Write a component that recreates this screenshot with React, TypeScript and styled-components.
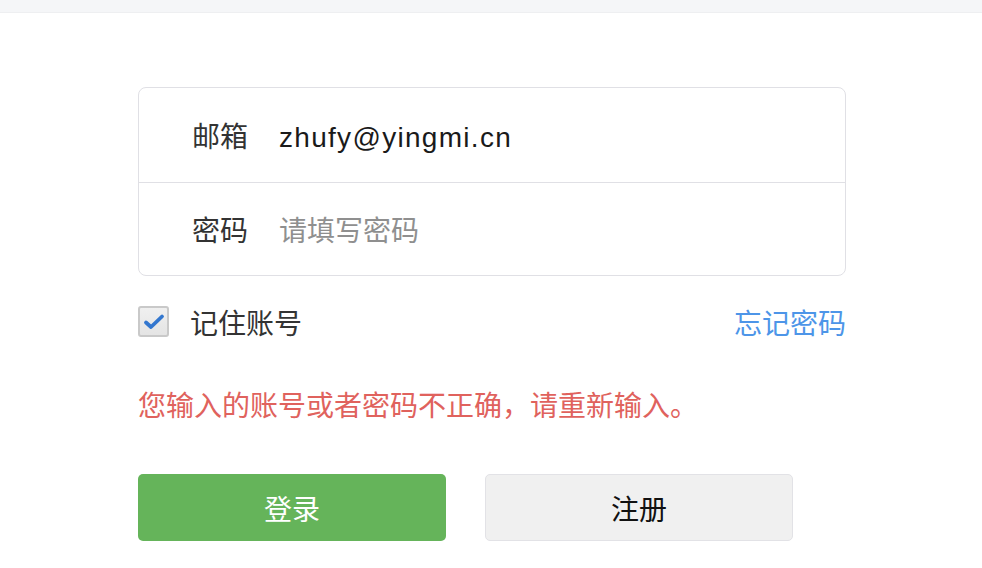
import React from "react";
import styled, { createGlobalStyle } from "styled-components";

const GlobalStyle = createGlobalStyle`
  html, body { margin: 0; padding: 0; background: #ffffff; }
  body { font-family: "Liberation Sans", "Noto Sans CJK SC", sans-serif; }
  * { box-sizing: border-box; }
`;

const TopBar = styled.div`
  height: 13px;
  background: #f5f6f8;
  border-bottom: 1px solid #eeeff1;
`;

const Page = styled.div`
  width: 708px;
  margin: 74px 0 0 138px;
`;

const FormBox = styled.div`
  border: 1.5px solid #e0e0e5;
  border-radius: 8px;
  background: #fff;
`;

const Field = styled.div<{ $first?: boolean }>`
  display: flex;
  align-items: center;
  height: ${(p) => (p.$first ? 94 : 93)}px;
  padding-left: 53px;
  border-top: ${(p) => (p.$first ? "none" : "1.5px solid #e0e0e5")};
`;

const Label = styled.span`
  width: 56px;
  margin-right: 31px;
  font-size: 28px;
  color: #333;
  font-family: "Noto Sans CJK SC", sans-serif;
`;

const Input = styled.input`
  flex: 1;
  border: none;
  outline: none;
  background: transparent;
  padding: 5px 0 0;
  font-size: 28px;
  color: #1a1a1a;
  font-family: "Liberation Sans", "Noto Sans CJK SC", sans-serif;
  letter-spacing: 1.3px;
  &::placeholder {
    color: #8f8f8f;
    letter-spacing: 0;
    font-family: "Noto Sans CJK SC", sans-serif;
  }
`;

const OptionsRow = styled.div`
  display: flex;
  align-items: center;
  justify-content: space-between;
  margin-top: 30px;
  height: 31px;
`;

const Remember = styled.label`
  display: flex;
  align-items: center;
  gap: 21px;
  font-size: 28px;
  color: #333;
  font-family: "Noto Sans CJK SC", sans-serif;
`;

const CheckBox = styled.span`
  width: 31px;
  height: 31px;
  border: 2px solid #c9c9c9;
  border-radius: 3px;
  background: linear-gradient(#f0f0f0, #e4e4e4);
  display: flex;
  align-items: center;
  justify-content: center;
`;

const ForgotLink = styled.a`
  font-size: 28px;
  color: #4d95e8;
  text-decoration: none;
  font-family: "Noto Sans CJK SC", sans-serif;
`;

const ErrorText = styled.p`
  margin: 47px 0 0;
  font-size: 28px;
  line-height: 40px;
  color: #e0625d;
  font-family: "Noto Sans CJK SC", sans-serif;
`;

const Buttons = styled.div`
  display: flex;
  gap: 39px;
  margin-top: 50px;
`;

const Button = styled.button<{ $primary?: boolean }>`
  width: 308px;
  height: 67px;
  border-radius: 5px;
  font-size: 28px;
  font-family: "Noto Sans CJK SC", sans-serif;
  border: ${(p) => (p.$primary ? "none" : "1.5px solid #e2e2e6")};
  background: ${(p) => (p.$primary ? "#65b45a" : "#f0f0f0")};
  color: ${(p) => (p.$primary ? "#ffffff" : "#111111")};
  cursor: pointer;
`;

export default function App() {
  return (
    <>
      <GlobalStyle />
      <TopBar />
      <Page>
        <FormBox>
          <Field $first>
            <Label>邮箱</Label>
            <Input defaultValue="zhufy@yingmi.cn" />
          </Field>
          <Field>
            <Label>密码</Label>
            <Input type="password" placeholder="请填写密码" />
          </Field>
        </FormBox>
        <OptionsRow>
          <Remember>
            <CheckBox>
              <svg width="22" height="18" viewBox="0 0 22 18">
                <path
                  d="M3 9.5 L8 14 L19 3.5"
                  fill="none"
                  stroke="#3377cf"
                  strokeWidth="3.8"
                  strokeLinecap="round"
                  strokeLinejoin="round"
                />
              </svg>
            </CheckBox>
            记住账号
          </Remember>
          <ForgotLink href="#">忘记密码</ForgotLink>
        </OptionsRow>
        <ErrorText>您输入的账号或者密码不正确，请重新输入。</ErrorText>
        <Buttons>
          <Button $primary>登录</Button>
          <Button>注册</Button>
        </Buttons>
      </Page>
    </>
  );
}
